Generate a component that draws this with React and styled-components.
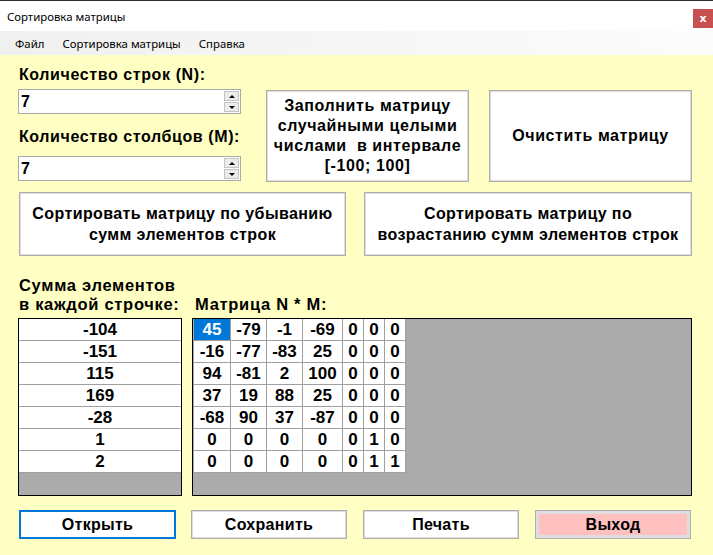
import React from 'react';
import styled, { createGlobalStyle } from 'styled-components';

const GlobalStyle = createGlobalStyle`
  html, body {
    margin: 0;
    padding: 0;
    background: #ffffc4;
  }
`;

const Window = styled.div`
  width: 713px;
  height: 555px;
  display: flex;
  flex-direction: column;
  border-top: 1px solid #2b2b2b;
  box-sizing: border-box;
  background: #ffffc4;
  font-family: 'Liberation Sans', Arial, sans-serif;
  overflow: hidden;
`;

const TitleBar = styled.div`
  height: 30px;
  background: #fff;
  display: flex;
  align-items: center;
  justify-content: space-between;
  padding-left: 7px;
  font-family: 'Noto Sans', sans-serif;
  font-size: 11.4px;
  color: #000;
`;

const CloseBox = styled.div`
  width: 20px;
  height: 19px;
  margin-top: 4px;
  background: #c75050;
  color: #fff;
  font-size: 11px;
  font-weight: bold;
  display: flex;
  align-items: center;
  justify-content: center;
  font-family: 'DejaVu Sans', sans-serif;
`;

const MenuBar = styled.div`
  height: 24px;
  background: linear-gradient(to right, #f0f0f0, #fcfcfc);
  display: flex;
  align-items: center;
  padding-left: 15px;
  gap: 18px;
  font-family: 'Noto Sans', sans-serif;
  font-size: 11.4px;
`;

const Content = styled.div`
  flex: 1;
  padding: 10px 21px 0 18px;
  display: flex;
  flex-direction: column;
`;

const TopRow = styled.div`
  display: flex;
  align-items: flex-start;
`;

const FieldColumn = styled.div`
  width: 223px;
  display: flex;
  flex-direction: column;
`;

const Label = styled.div`
  font-weight: bold;
  font-size: 16px;
  letter-spacing: 0.6px;
  line-height: 20px;
  height: 20px;
  margin-left: 1px;
  margin-top: ${p => p.$top || 0}px;
  white-space: nowrap;
`;

const Spin = styled.div`
  margin-top: ${p => p.$top || 0}px;
  height: 25px;
  box-sizing: border-box;
  border: 1px solid #a9a9a9;
  background: #fff;
  display: flex;
  align-items: stretch;
`;

const SpinValue = styled.div`
  flex: 1;
  font-size: 16px;
  font-weight: bold;
  padding-left: 2px;
  display: flex;
  align-items: center;
`;

const SpinButtons = styled.div`
  width: 15px;
  display: flex;
  flex-direction: column;
  padding: 1px;
  gap: 1px;
`;

const SpinArrow = styled.div`
  flex: 1;
  background: #ececec;
  border: 1px solid #c4c4c4;
  display: flex;
  align-items: center;
  justify-content: center;
  &::after {
    content: '';
    border-left: 3px solid transparent;
    border-right: 3px solid transparent;
    ${p => (p.$up ? 'border-bottom: 3px solid #000;' : 'border-top: 3px solid #000;')}
  }
`;

const Button = styled.div`
  box-sizing: border-box;
  width: ${p => p.$w}px;
  height: ${p => p.$h}px;
  margin-left: ${p => p.$ml || 0}px;
  margin-top: ${p => p.$mt || 0}px;
  background: ${p => p.$bg || '#fff'};
  border: ${p => (p.$focus ? '2px solid #0078d7' : '1px solid #adadad')};
  box-shadow: ${p => (p.$focus ? 'none' : `inset 0 0 0 ${p.$ring || 1}px #dedede`)};
  display: flex;
  align-items: center;
  justify-content: center;
  text-align: center;
  font-weight: bold;
  font-size: 16px;
  letter-spacing: ${p => p.$ls ?? 0.6}px;
  line-height: ${p => p.$lh || 20}px;
  color: #000;
`;

const SortRow = styled.div`
  display: flex;
  margin-top: 10px;
`;

const Captions = styled.div`
  display: flex;
  align-items: flex-end;
  margin-top: 20px;
`;

const Caption = styled.div`
  font-weight: bold;
  font-size: 16.5px;
  letter-spacing: 0.7px;
  line-height: 19px;
  white-space: nowrap;
  width: ${p => p.$w}px;
  margin-left: ${p => p.$ml || 0}px;
`;

const Tables = styled.div`
  display: flex;
  gap: 10px;
  margin-top: 4px;
  height: 178px;
`;

const ListBox = styled.div`
  width: 164px;
  box-sizing: border-box;
  border: 1px solid #000;
  background: #ababab;
  display: flex;
  flex-direction: column;
`;

const ListCell = styled.div`
  height: 22px;
  box-sizing: border-box;
  background: #fff;
  border-bottom: 1px solid #a0a0a0;
  display: flex;
  align-items: center;
  justify-content: center;
  font-weight: bold;
  font-size: 17px;
`;

const GridBox = styled.div`
  flex: 1;
  box-sizing: border-box;
  border: 1px solid #000;
  background: #ababab;
  padding-left: 1px;
  display: flex;
  flex-direction: column;
  align-items: flex-start;
`;

const GridRow = styled.div`
  display: flex;
`;

const GridCell = styled.div`
  width: ${p => p.$w}px;
  height: 22px;
  box-sizing: border-box;
  border-right: 1px solid #a0a0a0;
  border-bottom: 1px solid #a0a0a0;
  background: ${p => (p.$sel ? '#0078d7' : '#fff')};
  color: ${p => (p.$sel ? '#fff' : '#000')};
  display: flex;
  align-items: center;
  justify-content: center;
  font-weight: bold;
  font-size: 17px;
`;

const Footer = styled.div`
  display: grid;
  grid-template-columns: repeat(4, 156px);
  gap: 16px;
  margin-top: 14px;
  margin-left: 1px;
`;

const sums = [-104, -151, 115, 169, -28, 1, 2];
const matrix = [
  [45, -79, -1, -69, 0, 0, 0],
  [-16, -77, -83, 25, 0, 0, 0],
  [94, -81, 2, 100, 0, 0, 0],
  [37, 19, 88, 25, 0, 0, 0],
  [-68, 90, 37, -87, 0, 0, 0],
  [0, 0, 0, 0, 0, 1, 0],
  [0, 0, 0, 0, 0, 1, 1],
];
const colWidths = [37, 36, 36, 40, 21, 21, 21];

const Spinner = ({ value, top }) => (
  <Spin $top={top}>
    <SpinValue>{value}</SpinValue>
    <SpinButtons>
      <SpinArrow $up />
      <SpinArrow />
    </SpinButtons>
  </Spin>
);

export default function App() {
  return (
    <>
      <GlobalStyle />
      <Window>
        <TitleBar>
          Сортировка матрицы
          <CloseBox>x</CloseBox>
        </TitleBar>
        <MenuBar>
          <span>Файл</span>
          <span>Сортировка матрицы</span>
          <span>Справка</span>
        </MenuBar>
        <Content>
          <TopRow>
            <FieldColumn>
              <Label>Количество строк (N):</Label>
              <Spinner value="7" top={4} />
              <Label $top={13}>Количество столбцов (М):</Label>
              <Spinner value="7" top={9} />
            </FieldColumn>
            <Button $w={203} $h={92} $ml={25} $mt={25}>
              Заполнить матрицу
              <br />
              случайными целыми
              <br />
              числами&nbsp; в интервале
              <br />
              [-100; 100]
            </Button>
            <Button $w={203} $h={92} $ml={20} $mt={25}>
              Очистить матрицу
            </Button>
          </TopRow>
          <SortRow>
            <Button $w={327} $h={64} $ml={1} $lh={21} $ls={0.4}>
              Сортировать матрицу по убыванию
              <br />
              сумм элементов строк
            </Button>
            <Button $w={328} $h={64} $ml={18} $lh={21} $ls={0.4}>
              Сортировать матрицу по
              <br />
              возрастанию сумм элементов строк
            </Button>
          </SortRow>
          <Captions>
            <Caption $w={176} $ml={1}>
              Сумма элементов
              <br />
              в каждой строчке:
            </Caption>
            <Caption $w={200}>Матрица N * M:</Caption>
          </Captions>
          <Tables>
            <ListBox>
              {sums.map((s, i) => (
                <ListCell key={i}>{s}</ListCell>
              ))}
            </ListBox>
            <GridBox>
              {matrix.map((row, r) => (
                <GridRow key={r}>
                  {row.map((v, c) => (
                    <GridCell key={c} $w={colWidths[c]} $sel={r === 0 && c === 0}>
                      {v}
                    </GridCell>
                  ))}
                </GridRow>
              ))}
            </GridBox>
          </Tables>
          <Footer>
            <Button $w={157} $h={29} $focus $ls={0.3}>Открыть</Button>
            <Button $w={156} $h={29} $ls={0.3}>Сохранить</Button>
            <Button $w={156} $h={29} $ls={0.3}>Печать</Button>
            <Button $w={156} $h={29} $bg="#ffc0c0" $ring={3} $ls={0.3}>Выход</Button>
          </Footer>
        </Content>
      </Window>
    </>
  );
}
